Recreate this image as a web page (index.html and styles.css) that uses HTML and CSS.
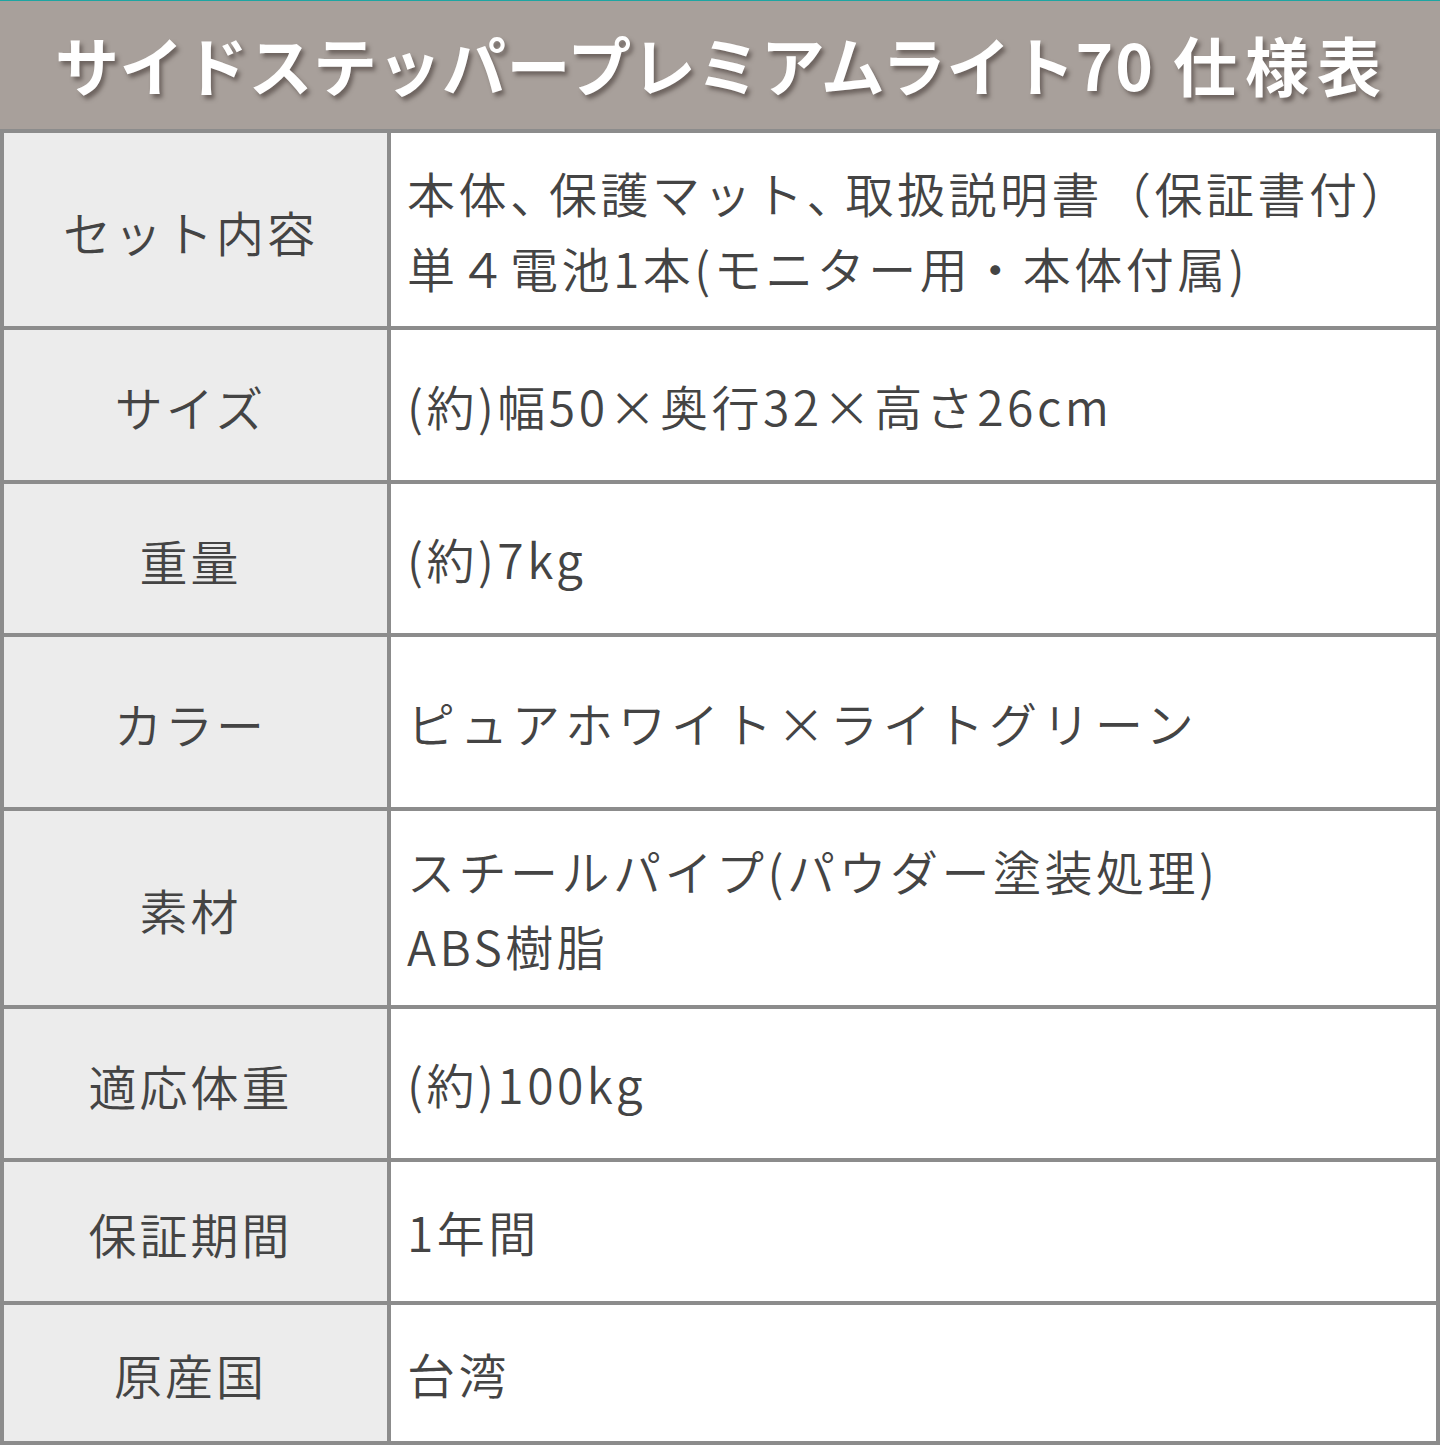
FILE: index.html
```html
<!DOCTYPE html>
<html lang="ja">
<head>
<meta charset="utf-8">
<title>仕様表</title>
<link rel="stylesheet" href="styles.css">
</head>
<body>
<div class="page">
  <header class="title-bar">
    <h1 class="title">サイドステッパープレミアムライト<span class="title-num">70</span><span class="title-kanji">仕様表</span></h1>
  </header>
  <div class="spec">
    <div class="label">セット内容</div>
    <div class="value"><p class="text">本体<span class="comma">、</span>保護マット<span class="comma">、</span>取扱説明書（保証書付）<br>単４電池1本(モニター用・本体付属)</p></div>
    <div class="label">サイズ</div>
    <div class="value"><p class="text">(約)幅50×奥行32×高さ26cm</p></div>
    <div class="label">重量</div>
    <div class="value"><p class="text">(約)7kg</p></div>
    <div class="label">カラー</div>
    <div class="value"><p class="text kana">ピュアホワイト×ライトグリーン</p></div>
    <div class="label">素材</div>
    <div class="value"><p class="text">スチールパイプ(パウダー塗装処理)<br>ABS樹脂</p></div>
    <div class="label">適応体重</div>
    <div class="value"><p class="text">(約)100kg</p></div>
    <div class="label">保証期間</div>
    <div class="value"><p class="text">1年間</p></div>
    <div class="label">原産国</div>
    <div class="value"><p class="text">台湾</p></div>
  </div>
</div>
</body>
</html>
```
FILE: styles.css
```css
* { box-sizing: border-box; }
html, body { margin: 0; padding: 0; background: #ffffff; }
body {
  font-family: "Noto Sans CJK JP", "Noto Sans", sans-serif;
  color: #444444;
}
.page { width: 1440px; }
.title-bar {
  height: 129px;
  border-top: 1px solid #1ea5a2;
  background: #a8a09b;
  display: flex;
  align-items: center;
  justify-content: center;
}
.title {
  margin: 0;
  font-size: 64px;
  font-weight: 700;
  color: #ffffff;
  letter-spacing: 0.5px;
  text-shadow: 3px 4px 4px rgba(60, 50, 45, 0.55);
  white-space: nowrap;
  line-height: 1;
  padding-left: 4px;
  padding-bottom: 4px;
}
.title-num { letter-spacing: 2px; margin-right: 18px; }
.title-kanji { letter-spacing: 8px; }
.spec {
  display: grid;
  grid-template-columns: 383px 1045px;
  grid-template-rows: 193px 150px 149px 170px 194px 149px 139px 136px;
  gap: 4px;
  padding: 4px;
  background: #8c8c8c;
}
.label {
  background: #ececec;
  display: flex;
  align-items: center;
  justify-content: center;
  font-size: 48px;
  font-weight: 350;
  letter-spacing: 3px;
  line-height: 1.2;
  padding-top: 4px;
  padding-right: 10px;
}
.value {
  background: #ffffff;
  display: flex;
  align-items: center;
  padding-left: 16px;
}
.text {
  margin: 0;
  font-size: 48px;
  font-weight: 350;
  line-height: 75px;
  letter-spacing: 3.5px;
  white-space: nowrap;
}
.text.kana { letter-spacing: 5px; }
.comma { font-feature-settings: "halt"; letter-spacing: 15px; }
```
